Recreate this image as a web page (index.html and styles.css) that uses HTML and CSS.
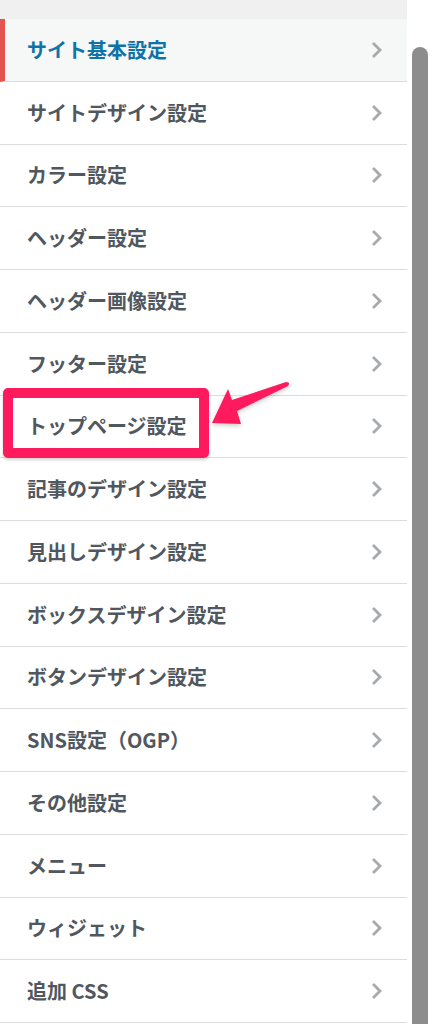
FILE: index.html
```html
<!DOCTYPE html>
<html lang="ja">
<head>
<meta charset="utf-8">
<link rel="stylesheet" href="styles.css">
</head>
<body>
<div class="frame">
  <div class="panel">
    <div class="topbar"></div>
    <ul class="menu">
      <li class="item active"><span class="label">サイト基本設定</span><svg class="chev" viewBox="0 0 12 18"><path d="M2 2 L9 9 L2 16"/></svg></li>
      <li class="item"><span class="label">サイトデザイン設定</span><svg class="chev" viewBox="0 0 12 18"><path d="M2 2 L9 9 L2 16"/></svg></li>
      <li class="item"><span class="label">カラー設定</span><svg class="chev" viewBox="0 0 12 18"><path d="M2 2 L9 9 L2 16"/></svg></li>
      <li class="item"><span class="label">ヘッダー設定</span><svg class="chev" viewBox="0 0 12 18"><path d="M2 2 L9 9 L2 16"/></svg></li>
      <li class="item"><span class="label">ヘッダー画像設定</span><svg class="chev" viewBox="0 0 12 18"><path d="M2 2 L9 9 L2 16"/></svg></li>
      <li class="item"><span class="label">フッター設定</span><svg class="chev" viewBox="0 0 12 18"><path d="M2 2 L9 9 L2 16"/></svg></li>
      <li class="item highlighted"><span class="label">トップページ設定</span><svg class="chev" viewBox="0 0 12 18"><path d="M2 2 L9 9 L2 16"/></svg>
        <span class="callout"></span>
        <svg class="arrow" viewBox="0 0 100 60"><path d="M2 42 L18 8 L22 19 L76 1 Q81 1 78 5 L27 30 L31 43 Z"/></svg>
      </li>
      <li class="item"><span class="label">記事のデザイン設定</span><svg class="chev" viewBox="0 0 12 18"><path d="M2 2 L9 9 L2 16"/></svg></li>
      <li class="item"><span class="label">見出しデザイン設定</span><svg class="chev" viewBox="0 0 12 18"><path d="M2 2 L9 9 L2 16"/></svg></li>
      <li class="item"><span class="label">ボックスデザイン設定</span><svg class="chev" viewBox="0 0 12 18"><path d="M2 2 L9 9 L2 16"/></svg></li>
      <li class="item"><span class="label">ボタンデザイン設定</span><svg class="chev" viewBox="0 0 12 18"><path d="M2 2 L9 9 L2 16"/></svg></li>
      <li class="item"><span class="label">SNS設定（OGP）</span><svg class="chev" viewBox="0 0 12 18"><path d="M2 2 L9 9 L2 16"/></svg></li>
      <li class="item"><span class="label">その他設定</span><svg class="chev" viewBox="0 0 12 18"><path d="M2 2 L9 9 L2 16"/></svg></li>
      <li class="item"><span class="label">メニュー</span><svg class="chev" viewBox="0 0 12 18"><path d="M2 2 L9 9 L2 16"/></svg></li>
      <li class="item"><span class="label">ウィジェット</span><svg class="chev" viewBox="0 0 12 18"><path d="M2 2 L9 9 L2 16"/></svg></li>
      <li class="item"><span class="label">追加 CSS</span><svg class="chev" viewBox="0 0 12 18"><path d="M2 2 L9 9 L2 16"/></svg></li>
    </ul>
  </div>
  <div class="scrolltrack"><div class="thumb"></div></div>
</div>
</body>
</html>
```
FILE: styles.css
```css
html, body {
  margin: 0;
  padding: 0;
  background: #ffffff;
}
body {
  font-family: "Noto Sans CJK JP", "Noto Sans", sans-serif;
  width: 434px;
  height: 1024px;
  overflow: hidden;
}
.frame {
  display: flex;
  height: 1024px;
}
.panel {
  width: 407px;
  flex: none;
  background: #ffffff;
}
.topbar {
  height: 19px;
  background: #f0f0f1;
}
.menu {
  list-style: none;
  margin: 0;
  padding: 0;
}
.item {
  position: relative;
  box-sizing: border-box;
  height: 62.75px;
  display: flex;
  align-items: center;
  justify-content: space-between;
  padding: 0 24px 0 27px;
  border-bottom: 1px solid #dcdcde;
  color: #50575e;
  font-size: 20px;
  font-weight: 700;
  line-height: 1;
}
.item.active {
  background: #f6f7f7;
  color: #0e73a8;
  border-left: 5px solid #e4534f;
  padding-left: 22px;
}
.label {
  white-space: nowrap;
}
.chev {
  width: 12px;
  height: 18px;
  flex: none;
}
.chev path {
  fill: none;
  stroke: #a7aaad;
  stroke-width: 2.8;
}
.callout {
  position: absolute;
  left: 3px;
  top: -8px;
  width: 206px;
  height: 70px;
  box-sizing: border-box;
  border: 10px solid #ff1a5d;
  border-radius: 5px;
  box-shadow: 0 2px 3px rgba(0, 0, 0, 0.18);
}
.arrow {
  position: absolute;
  left: 210px;
  top: -15px;
  width: 100px;
  height: 60px;
  overflow: visible;
  filter: drop-shadow(0 2px 2px rgba(0, 0, 0, 0.2));
}
.arrow path {
  fill: #ff1a5d;
}
.scrolltrack {
  flex: 1;
  padding: 47px 0 0 5px;
  box-sizing: border-box;
}
.thumb {
  width: 16px;
  height: 100%;
  background: #8d8d8d;
  border-radius: 8px 8px 0 0;
}
```
